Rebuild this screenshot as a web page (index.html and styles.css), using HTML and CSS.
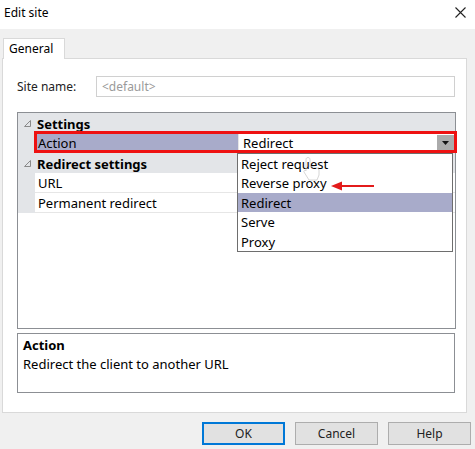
FILE: index.html
```html
<!DOCTYPE html>
<html lang="en">
<head>
  <meta charset="UTF-8">
  <title>Edit site</title>
  <link rel="stylesheet" href="styles.css">
</head>
<body>
  <div class="titlebar">
    <div class="caption">Edit site</div>
    <svg class="close" width="11" height="11" viewBox="0 0 11 11">
      <path d="M0.5 0.5 L10.5 10.5 M10.5 0.5 L0.5 10.5" stroke="#222" stroke-width="1.1" fill="none"/>
    </svg>
  </div>

  <div class="client">
    <div class="tabstrip">
      <div class="tab">General</div>
    </div>
    <div class="panel">
      <div class="field">
        <label class="field-label">Site name:</label>
        <div class="textbox">&lt;default&gt;</div>
      </div>

      <div class="grid">
        <div class="cat">
          <span class="toggle"><svg width="7" height="7" viewBox="0 0 7 7"><path d="M6.5 0.5 L6.5 6.5 L0.5 6.5 Z" fill="none" stroke="#8a8a8a"/></svg></span>
          <span class="cat-name">Settings</span>
        </div>
        <div class="prop selected">
          <div class="gutter"></div>
          <div class="prop-name">Action</div>
          <div class="prop-value">
            <span>Redirect</span>
            <span class="drop-btn"><svg width="7" height="4" viewBox="0 0 7 4"><path d="M0 0 L7 0 L3.5 4 Z" fill="#111"/></svg></span>
          </div>
        </div>
        <div class="cat">
          <span class="toggle"><svg width="7" height="7" viewBox="0 0 7 7"><path d="M6.5 0.5 L6.5 6.5 L0.5 6.5 Z" fill="none" stroke="#8a8a8a"/></svg></span>
          <span class="cat-name">Redirect settings</span>
        </div>
        <div class="prop">
          <div class="gutter"></div>
          <div class="prop-name">URL</div>
          <div class="prop-value"></div>
        </div>
        <div class="prop">
          <div class="gutter"></div>
          <div class="prop-name">Permanent redirect</div>
          <div class="prop-value"></div>
        </div>
        <div class="grid-rest">
          <div class="gutter"></div>
        </div>

        <!-- open list of the Action combo -->
        <ul class="droplist">
          <li>Reject request</li>
          <li>Reverse proxy</li>
          <li class="hot">Redirect</li>
          <li>Serve</li>
          <li>Proxy</li>
        </ul>
        <div class="mark"></div>
        <svg class="arrow" width="46" height="12" viewBox="0 0 46 12">
          <path d="M10 6 L44 6" stroke="#e31b1b" stroke-width="2.2"/>
          <path d="M1 6 L12 1.5 L12 10.5 Z" fill="#e31b1b"/>
        </svg>
        <svg class="cursor" width="22" height="26" viewBox="0 0 22 26">
          <path d="M7 1.5 C8.5 1.5 9 2.5 9 3.5 L9 11 L11 10.5 L13 11 L15 11.5 L17 12.5 L18 14 L18 19 L16 24 L8 24 L3 16 C2.5 15 3.5 14 4.5 14.5 L5 15 L5 3.5 C5 2.5 5.5 1.5 7 1.5 Z" fill="none" stroke="#c4c4c4" stroke-width="1" opacity="0.7"/>
        </svg>
      </div>

      <div class="help">
        <div class="help-title">Action</div>
        <div class="help-text">Redirect the client to another URL</div>
      </div>
    </div>

    <div class="buttons">
      <button class="default">OK</button>
      <button>Cancel</button>
      <button>Help</button>
    </div>
  </div>
</body>
</html>
```

FILE: styles.css
```css
html, body {
    margin: 0;
    padding: 0;
}
body {
    width: 475px;
    height: 449px;
    overflow: hidden;
    background-color: #f0f0f0;
    font-family: "Noto Sans", "Open Sans", sans-serif;
    font-size: 12px;
    color: #000;
}

.titlebar {
    height: 29px;
    background-color: #fff;
    display: flex;
    align-items: center;
    justify-content: space-between;
    padding: 0 9px 0 4px;
}
.caption {
    font-size: 12px;
    margin-top: -4px;
}
.close {
    margin-top: -4px;
}

.client {
    padding: 8px 8px 0 2px;
}
.tabstrip {
    display: flex;
    padding-left: 1px;
}
.tab {
    width: 55px;
    height: 20px;
    background-color: #fff;
    border: 1px solid #d9d9d9;
    border-bottom: none;
    padding-left: 5px;
    line-height: 20px;
    position: relative;
    top: 1px;
}
.panel {
    box-sizing: border-box;
    height: 355px;
    background-color: #fff;
    border: 1px solid #d9d9d9;
    padding: 17px 10px 0 14px;
}

.field {
    display: flex;
    align-items: center;
}
.field-label {
    width: 79px;
    color: #222;
}
.textbox {
    width: 352px;
    height: 19px;
    border: 1px solid #d0d0d0;
    padding-left: 5px;
    line-height: 19px;
    color: #9a9a9a;
}

.grid {
    position: relative;
    margin-top: 15px;
    height: 215px;
    width: 437px;
    border: 1px solid #8c8f94;
    display: flex;
    flex-direction: column;
    font-size: 13px;
}
.cat {
    box-sizing: border-box;
    height: 20px;
    padding-top: 2px;
    background-color: #e3e5e8;
    display: flex;
    align-items: center;
    flex-shrink: 0;
}
.toggle {
    width: 19px;
    display: flex;
    justify-content: center;
    margin-top: -2px;
}
.cat-name {
    font-weight: bold;
}
.prop {
    height: 20px;
    display: flex;
    flex-shrink: 0;
}
.gutter {
    width: 17px;
    background-color: #e3e5e8;
    flex-shrink: 0;
}
.prop-name {
    width: 200px;
    padding-left: 3px;
    line-height: 21px;
    height: 19px;
    border-bottom: 1px solid #e6e6e6;
    border-right: 1px solid #e6e6e6;
}
.prop-value {
    flex: 1;
    padding-left: 4px;
    line-height: 21px;
    height: 19px;
    border-bottom: 1px solid #e6e6e6;
    display: flex;
    justify-content: space-between;
}
.selected .prop-name {
    background-color: #a8abca;
}
.drop-btn {
    width: 17px;
    height: 16px;
    margin: 2px 1px 0 0;
    background-color: #ababab;
    display: flex;
    align-items: center;
    justify-content: center;
}
.grid-rest {
    flex: 1;
    display: flex;
}
.grid-rest .gutter {
    background-color: #fff;
}

.droplist {
    position: absolute;
    left: 219px;
    top: 40px;
    width: 214px;
    margin: 0;
    padding: 0;
    list-style: none;
    background-color: #fff;
    border: 1px solid #6e6e6e;
}
.droplist li {
    height: 19.4px;
    line-height: 21px;
    padding-left: 3px;
}
.droplist li.hot {
    background-color: #a8abca;
}

.mark {
    position: absolute;
    left: 16px;
    top: 18px;
    width: 423px;
    height: 22px;
    box-sizing: border-box;
    border: 3px solid #ee1111;
}
.arrow {
    position: absolute;
    left: 312px;
    top: 67px;
}
.cursor {
    position: absolute;
    left: 283px;
    top: 43px;
}

.help {
    margin-top: 4px;
    width: 431px;
    height: 55px;
    border: 1px solid #8c8f94;
    padding: 3px 0 0 5px;
    font-size: 13px;
}
.help-title {
    font-weight: bold;
    line-height: 17px;
}
.help-text {
    line-height: 20px;
}

.buttons {
    display: flex;
    justify-content: flex-end;
    gap: 10px;
    padding: 9px 0 0 0;
    margin-right: -4px;
}
button {
    width: 83px;
    height: 23px;
    background-color: #e1e1e1;
    border: 1px solid #adadad;
    font-family: "Noto Sans", "Open Sans", sans-serif;
    font-size: 12px;
    color: #222;
    padding: 0;
}
button.default {
    border: 2px solid #0078d7;
}
```
